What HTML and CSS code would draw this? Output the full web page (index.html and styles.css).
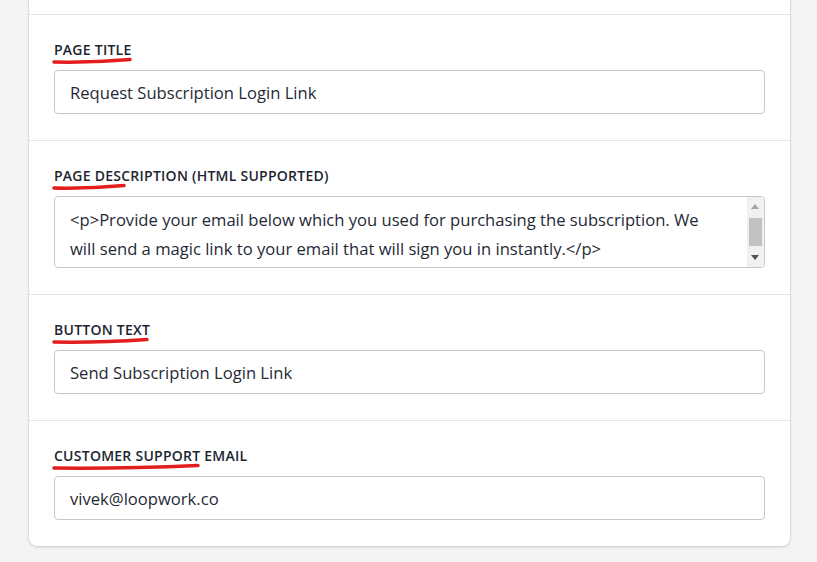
FILE: index.html
```html
<!DOCTYPE html>
<html lang="en">
<head>
    <meta charset="UTF-8">
    <meta name="viewport" content="width=device-width, initial-scale=1.0">
    <title>Login Page Settings</title>
    <link rel="stylesheet" href="styles.css">
</head>
<body>
    <div class="card">
        <div class="section section-top"></div>

        <div class="section">
            <label class="field-label" for="pageTitle">
                PAGE TITLE
                <svg class="mark" width="80" height="7" viewBox="0 0 80 7"><path d="M2 5 C 25 5.5, 55 4.5, 78 2.5" /></svg>
            </label>
            <input type="text" id="pageTitle" class="text-input" value="Request Subscription Login Link">
        </div>

        <div class="section">
            <label class="field-label" for="pageDescription">
                PAGE DESCRIPTION (HTML SUPPORTED)
                <svg class="mark" width="74" height="7" viewBox="0 0 74 7"><path d="M2 5 C 22 5.5, 50 4.5, 72 2.5" /></svg>
            </label>
            <div class="area-wrap">
                <textarea id="pageDescription" class="text-area" rows="2"><p>Provide your email below which you used for purchasing the subscription. We will send a magic link to your email that will sign you in instantly.</p></textarea>
                <div class="fake-scrollbar">
                    <span class="arrow arrow-up"></span>
                    <span class="thumb"></span>
                    <span class="arrow arrow-down"></span>
                </div>
            </div>
        </div>

        <div class="section">
            <label class="field-label" for="buttonText">
                BUTTON TEXT
                <svg class="mark" width="97" height="7" viewBox="0 0 97 7"><path d="M2 5 C 30 5.5, 65 4.5, 95 2.5" /></svg>
            </label>
            <input type="text" id="buttonText" class="text-input" value="Send Subscription Login Link">
        </div>

        <div class="section">
            <label class="field-label" for="supportEmail">
                CUSTOMER SUPPORT EMAIL
                <svg class="mark" width="148" height="7" viewBox="0 0 148 7"><path d="M2 5 C 45 5.5, 100 4.5, 146 2.5" /></svg>
            </label>
            <input type="text" id="supportEmail" class="text-input" value="vivek@loopwork.co">
        </div>
    </div>
</body>
</html>
```

FILE: styles.css
```css
body {
    margin: 0;
    padding: 0 27px 16px 29px;
    background: #f4f4f4;
    font-family: "Open Sans", "Noto Sans", sans-serif;
    color: #202223;
    overflow: hidden;
}

.card {
    margin-top: -20px;
    background: #fff;
    border-radius: 8px;
    box-shadow: 0 0 0 1px rgba(63, 63, 68, 0.05), 0 1px 3px rgba(63, 63, 68, 0.2);
}

.section {
    padding: 25px 25px 26px;
    border-top: 1px solid #e4e5e7;
}

.section-top {
    height: 34px;
    padding: 0;
    border-top: none;
}

.field-label {
    position: relative;
    display: block;
    font-size: 14px;
    font-weight: 600;
    letter-spacing: 0.25px;
    line-height: 20px;
    margin-bottom: 10px;
    color: #1c2630;
}

.mark {
    position: absolute;
    left: -2px;
    top: 17px;
}

.mark path {
    fill: none;
    stroke: #e31c1c;
    stroke-width: 3.5;
    stroke-linecap: round;
}

.text-input,
.text-area {
    display: block;
    box-sizing: border-box;
    width: 100%;
    margin: 0;
    padding: 0 15px;
    border: 1px solid #c4c8cc;
    border-radius: 4px;
    font-family: inherit;
    font-size: 16.6px;
    color: #1f2a36;
    background: #fff;
    outline: none;
}

.text-input {
    height: 44px;
}

.area-wrap {
    position: relative;
}

.text-area {
    height: 72px;
    padding: 8px 49px 8px 15px;
    line-height: 29px;
    resize: none;
    overflow: hidden;
}

.fake-scrollbar {
    position: absolute;
    top: 1px;
    right: 1px;
    bottom: 1px;
    width: 17px;
    background: #f1f1f1;
    border-radius: 0 3px 3px 0;
}

.thumb {
    position: absolute;
    top: 21px;
    left: 2px;
    width: 13px;
    height: 28px;
    background: #c1c1c1;
}

.arrow {
    position: absolute;
    left: 4px;
    width: 0;
    height: 0;
    border-left: 4.5px solid transparent;
    border-right: 4.5px solid transparent;
}

.arrow-up {
    top: 7px;
    border-bottom: 5px solid #a3a3a3;
}

.arrow-down {
    bottom: 7px;
    border-top: 5px solid #505050;
}
```
